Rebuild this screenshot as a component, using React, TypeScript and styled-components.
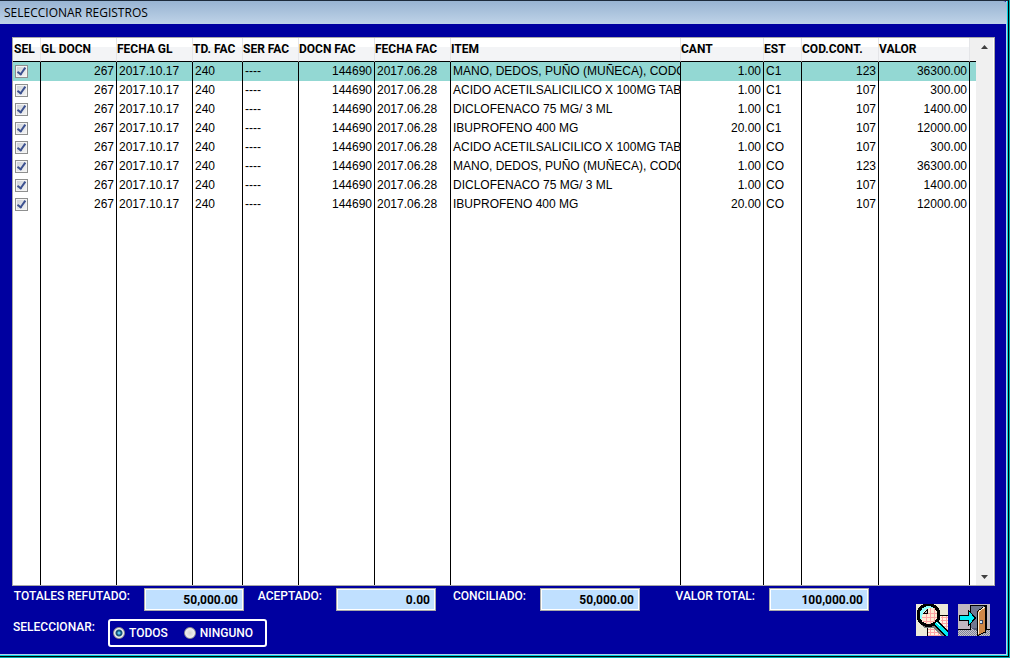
import React from "react";
import styled, { createGlobalStyle } from "styled-components";

const ui = `Roboto, "Liberation Sans", sans-serif`;

const GlobalStyle = createGlobalStyle`
  *, *::before, *::after { box-sizing: border-box; }
  body { margin: 0; }
`;

const Desktop = styled.div`
  height: 100vh;
  padding-bottom: 1px;
  padding-right: 1px;
  background: #00a8b0;
`;

const Window = styled.main`
  height: 100%;
  display: flex;
  flex-direction: column;
  border-right: 1px solid #000;
  border-bottom: 1px solid #000;
  border-top: 1px solid #1c2a3a;
  background: #0000a0;
  box-shadow: inset -1px -1px #00d0e0, inset -2px -2px #b4d0ea;
`;

const TitleBar = styled.header`
  height: 23px;
  flex: none;
  display: flex;
  align-items: center;
  margin-right: 1px;
  padding-left: 4px;
  border-top-right-radius: 4px;
  background: linear-gradient(to bottom, #98b4d2, #bfd3e8);
`;

const Title = styled.h1`
  margin: 0;
  font: 400 12px/16px "Open Sans", "Noto Sans", sans-serif;
  color: #000;
`;

const Content = styled.div`
  flex: 1;
  min-height: 0;
  display: flex;
  flex-direction: column;
  padding: 13px 13px 7px 12px;
`;

const GridPanel = styled.section`
  flex: 1;
  min-height: 0;
  display: flex;
  border: 1px solid #a8a8a8;
  background: #fff;
`;

const TableArea = styled.div`
  flex: 1;
  min-width: 0;
  overflow: hidden;
`;

const Table = styled.table`
  width: 100%;
  height: 100%;
  table-layout: fixed;
  border-collapse: separate;
  border-spacing: 0;
  font: 400 12px/16px "Liberation Sans", Arial, sans-serif;
  color: #000;
`;

const HeadCell = styled.th`
  height: 24px;
  padding: 0 0 1px;
  text-align: left;
  white-space: nowrap;
  font: 700 12px/20px ${ui};
  background: linear-gradient(to bottom, #fff 40%, #f3f4f6 41%, #f3f4f6);
  border-right: 1px solid #e4e5e8;
  border-bottom: 1px solid #000;

  &:first-child { padding-left: 1px; }
  &:last-child { background: #f0f0f0; border-right: 0; }
`;

const Row = styled.tr<{ $active?: boolean }>`
  height: 19px;
  background: ${(p) => (p.$active ? "#93d8d3" : "transparent")};
`;

const Cell = styled.td<{ $right?: boolean }>`
  padding: ${(p) => (p.$right ? "0 2px 2px" : "0 0 2px 2px")};
  overflow: hidden;
  white-space: nowrap;
  vertical-align: middle;
  text-align: ${(p) => (p.$right ? "right" : "left")};
  border-right: 1px solid #000;

  &:last-child { border-right: 0; }
`;

const Check = styled.input`
  appearance: none;
  display: block;
  width: 13px;
  height: 13px;
  margin: 1px 0 0;
  border: 1px solid #8e8f8f;
  box-shadow: inset 0 0 0 1px #f4f4f4;
  background: linear-gradient(135deg, #cbcfd5, #f6f6f6);

  &:checked::before {
    content: "";
    display: block;
    width: 5px;
    height: 9px;
    margin: 0 0 0 3px;
    border: solid #3c5190;
    border-width: 0 2px 2px 0;
    transform: rotate(35deg);
  }
`;

const ScrollBar = styled.div`
  width: 18px;
  flex: none;
  display: flex;
  flex-direction: column;
  justify-content: space-between;
  background: #f0f0f0;
  border-right: 1px solid #fff;
`;

const ScrollButton = styled.button`
  display: flex;
  align-items: center;
  justify-content: center;
  height: 17px;
  padding: 0;
  border: 0;
  background: transparent;
`;

const Totals = styled.section`
  display: grid;
  grid-template-columns: 132px 100px 92px 100px 104px 100px 129px 100px;
  align-items: start;
  padding-top: 2px;
`;

const TotalLabel = styled.label`
  padding-right: 14px;
  text-align: right;
  white-space: nowrap;
  font: 500 12px/16px ${ui};
  color: #fff;
`;

const TotalBox = styled.input`
  width: 100%;
  height: 23px;
  padding: 0 5px;
  border: 1px solid #a9a9a9;
  outline: 0;
  box-shadow: inset 0 0 0 1px #fff;
  background: #c0e0ff;
  text-align: right;
  font: 700 12px/18px ${ui};
  color: #000;
`;

const Footer = styled.footer`
  display: flex;
  justify-content: space-between;
  align-items: flex-start;
  height: 38px;
`;

const Choice = styled.div`
  display: flex;
  align-items: flex-start;
  padding: 8px 0 0 1px;
`;

const ChoiceLabel = styled.span`
  width: 95px;
  font: 500 12px/16px ${ui};
  color: #fff;
`;

const RadioGroup = styled.div`
  display: flex;
  align-items: center;
  gap: 16px;
  height: 28px;
  padding: 0 12px 0 3px;
  border: 2px solid #fff;
  border-radius: 3px;
`;

const RadioLabel = styled.label`
  display: flex;
  align-items: center;
  gap: 4px;
  font: 500 12px/16px ${ui};
  color: #fff;
`;

const Radio = styled.input`
  appearance: none;
  width: 12px;
  height: 12px;
  margin: 0;
  border: 1px solid #8e8f8f;
  border-radius: 50%;
  background: radial-gradient(circle, #d4d4d4, #fff);

  &:checked {
    background: radial-gradient(circle, #58c8f0 0 1px, #17557c 2px 3px, #f0f0f0 4px);
  }
`;

const Actions = styled.div`
  display: flex;
  gap: 10px;
  padding-right: 5px;
`;

const IconButton = styled.button`
  display: block;
  width: 32px;
  height: 32px;
  margin-top: -7px;
  padding: 0;
  border: 0;
  background: transparent;

  svg { display: block; }
`;

const PreviewIcon = () => (
  <svg width="32" height="32" viewBox="0 0 32 32" shapeRendering="crispEdges" aria-hidden="true">
    <rect width="32" height="32" fill="#ece9d8" />
    <path d="M11 20h21v12H11zM24 11h8v21h-8z" fill="#fff4e4" />
    <path d="M12 22.500h20M12 25.500h20M12 28.500h20M12 31.500h20M25 13.500h7M25 16.500h7M25 19.500h7M14.500 21v11M18.500 21v11M22.500 21v11M26.500 12v20M30.500 12v20" stroke="#ffa4a4" />
    <path d="M24 11.500h8M11.500 21v11" stroke="#000" />
    <path d="M3 18l5 6h9l9 8h6l-12-12z" fill="#808080" />
    <circle cx="12.500" cy="11" r="10.500" fill="#ffecd4" />
    <path d="M7 9.500h16M6 13.500h17M7 17.500h14M10.500 5v15M14.500 4v17M18.500 4v16" stroke="#ffa4a4" />
    <path d="M5 17C0 9 6 1 14 1.500c4 0 6 2 7 3-7-2-10 0-11 1L7 9l-1 4z" fill="#90ffff" />
    <path d="M7.500 9.500h4V5.500z" fill="#c0c0c0" stroke="#000" />
    <circle cx="12.500" cy="11" r="10.500" fill="none" stroke="#000" strokeWidth="3" />
    <path d="M19 18l14 14" stroke="#000" strokeWidth="7" />
    <path d="M20 19l13 13" stroke="#00e8f0" strokeWidth="4" />
    <path d="M20 18l4 4" stroke="#e8ffff" />
  </svg>
);

const ExitIcon = () => (
  <svg width="32" height="32" viewBox="0 0 32 32" shapeRendering="crispEdges" aria-hidden="true">
    <defs>
      <pattern id="floor" width="2" height="2" patternUnits="userSpaceOnUse">
        <rect width="2" height="2" fill="#c8c4cc" />
        <path d="M0 0h1v1H0zM1 1h1v1H1z" fill="#808498" />
      </pattern>
    </defs>
    <rect width="32" height="32" fill="#c0b8c0" />
    <rect y="25" width="32" height="7" fill="url(#floor)" />
    <path d="M0 25.500h12.500v-24h16v24H32" fill="none" stroke="#000" />
    <rect x="13" y="2" width="15" height="22" fill="#707890" />
    <path d="M13 24h8v4z" fill="#505870" />
    <path d="M19.500 7.500l8-5.500v26l-8 3.500z" fill="#d08848" stroke="#000" />
    <path d="M20.500 8v22M21 7.500l6-4.500" stroke="#fff0d0" />
    <path d="M22 16h3v4h-3z" fill="#404860" />
    <path d="M22 17h2v2h-2z" fill="#d0e8ff" />
    <path d="M1.500 11.500h9v-5l7 7.500-7 7.500v-5h-9z" fill="#00f0f8" stroke="#000" />
  </svg>
);

const widths = [28, 76, 76, 50, 56, 76, 76, 0, 83, 38, 77, 91, 6];
const heads = ["SEL", "GL DOCN", "FECHA GL", "TD. FAC", "SER FAC", "DOCN FAC", "FECHA FAC", "ITEM", "CANT", "EST", "COD.CONT.", "VALOR", ""];
const rightAligned = [0, 4, 7, 9, 10];

const MANO = "MANO, DEDOS, PUÑO (MUÑECA), CODO";
const ACIDO = "ACIDO ACETILSALICILICO X 100MG TAB";
const DICLO = "DICLOFENACO 75 MG/ 3 ML";
const IBU = "IBUPROFENO 400 MG";

const records = [
  [MANO, "1.00", "C1", "123", "36300.00"],
  [ACIDO, "1.00", "C1", "107", "300.00"],
  [DICLO, "1.00", "C1", "107", "1400.00"],
  [IBU, "20.00", "C1", "107", "12000.00"],
  [ACIDO, "1.00", "CO", "107", "300.00"],
  [MANO, "1.00", "CO", "123", "36300.00"],
  [DICLO, "1.00", "CO", "107", "1400.00"],
  [IBU, "20.00", "CO", "107", "12000.00"],
].map((r) => ["267", "2017.10.17", "240", "----", "144690", "2017.06.28", ...r]);

const totals = [
  ["refutado", "TOTALES REFUTADO:", "50,000.00"],
  ["aceptado", "ACEPTADO:", "0.00"],
  ["conciliado", "CONCILIADO:", "50,000.00"],
  ["total", "VALOR TOTAL:", "100,000.00"],
];

export default function App() {
  return (
    <Desktop>
      <GlobalStyle />
      <Window>
        <TitleBar>
          <Title>SELECCIONAR REGISTROS</Title>
        </TitleBar>
        <Content>
          <GridPanel>
            <TableArea>
              <Table>
                <colgroup>
                  {widths.map((w, i) => (
                    <col key={i} width={w || undefined} />
                  ))}
                </colgroup>
                <thead>
                  <tr>
                    {heads.map((h, i) => (
                      <HeadCell key={i}>{h}</HeadCell>
                    ))}
                  </tr>
                </thead>
                <tbody>
                  {records.map((r, i) => (
                    <Row key={i} $active={i === 0}>
                      <Cell>
                        <Check type="checkbox" defaultChecked aria-label={`SEL ${i + 1}`} />
                      </Cell>
                      {r.map((v, j) => (
                        <Cell key={j} $right={rightAligned.includes(j)}>
                          {v}
                        </Cell>
                      ))}
                      <Cell />
                    </Row>
                  ))}
                  <tr>
                    {heads.map((_, i) => (
                      <Cell key={i} />
                    ))}
                  </tr>
                </tbody>
              </Table>
            </TableArea>
            <ScrollBar>
              <ScrollButton aria-label="Subir">
                <svg width="7" height="4" viewBox="0 0 7 4"><path d="M0 4l3.500-4L7 4z" fill="#404040" /></svg>
              </ScrollButton>
              <ScrollButton aria-label="Bajar">
                <svg width="7" height="4" viewBox="0 0 7 4"><path d="M0 0h7L3.500 4z" fill="#404040" /></svg>
              </ScrollButton>
            </ScrollBar>
          </GridPanel>
          <Totals>
            {totals.map(([id, label, value]) => (
              <React.Fragment key={id}>
                <TotalLabel htmlFor={id}>{label}</TotalLabel>
                <TotalBox id={id} readOnly value={value} />
              </React.Fragment>
            ))}
          </Totals>
          <Footer>
            <Choice>
              <ChoiceLabel id="choice">SELECCIONAR:</ChoiceLabel>
              <RadioGroup role="radiogroup" aria-labelledby="choice">
                <RadioLabel>
                  <Radio type="radio" name="pick" defaultChecked />
                  TODOS
                </RadioLabel>
                <RadioLabel>
                  <Radio type="radio" name="pick" />
                  NINGUNO
                </RadioLabel>
              </RadioGroup>
            </Choice>
            <Actions>
              <IconButton aria-label="Vista previa"><PreviewIcon /></IconButton>
              <IconButton aria-label="Salir"><ExitIcon /></IconButton>
            </Actions>
          </Footer>
        </Content>
      </Window>
    </Desktop>
  );
}
